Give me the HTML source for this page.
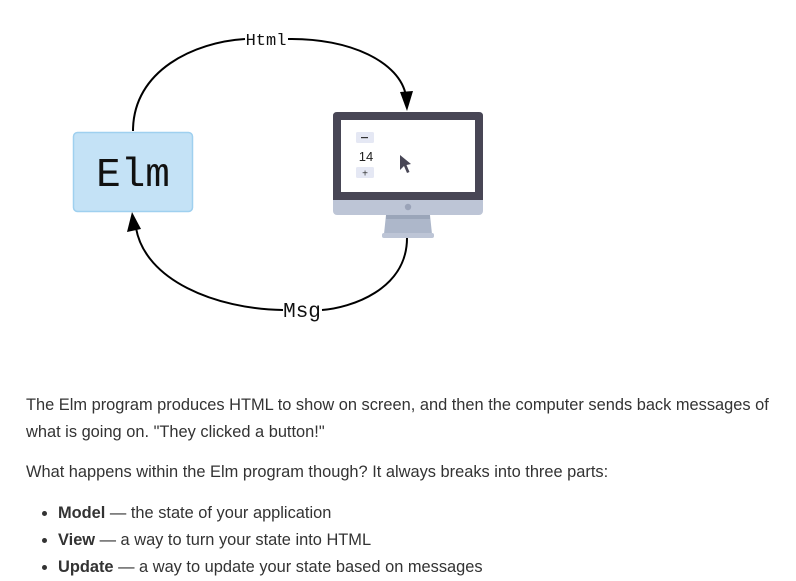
<!DOCTYPE html>
<html><head><meta charset="utf-8"><style>
html,body{margin:0;padding:0;background:#fff;width:796px;height:580px;overflow:hidden}
body{font-family:"Liberation Sans",Arial,sans-serif;font-size:16.4px;color:#333;}
svg{position:absolute;left:0;top:0}
.t{position:absolute;left:26px;width:765px;line-height:27px;margin:0}
ul{position:absolute;left:0;top:500px;margin:0;padding-left:58px;line-height:27px;list-style:disc}
</style></head><body>
<svg width="796" height="360" viewBox="0 0 796 360">
<rect x="73.5" y="132.5" width="119" height="79" rx="4" fill="#c4e2f6" stroke="#9fd0ef" stroke-width="1.5"/>
<text x="133" y="186" text-anchor="middle" font-family="Liberation Mono,monospace" font-size="41" fill="#111">Elm</text>
<g fill="none" stroke="#000" stroke-width="2">
<path d="M133,131 C133,70 195,42 245,39"/>
<path d="M288,39 C350,38 400,62 406,96"/>
<path d="M407,238 C407,290 350,308 322,310"/>
<path d="M283,310 C215,309 145,280 136,228"/>
</g>
<polygon points="407,111 400,92 413,91" fill="#000"/>
<polygon points="132,212 127,232 141,229" fill="#000"/>
<text x="266" y="45" text-anchor="middle" font-family="Liberation Mono,monospace" font-size="17" fill="#111">Html</text>
<text x="302" y="317" text-anchor="middle" font-family="Liberation Mono,monospace" font-size="21" fill="#111">Msg</text>
<path d="M386,215 L430,215 L432,234 L384,234 Z" fill="#adb7ca"/>
<rect x="386" y="215" width="44" height="4" fill="#9aa5b9"/>
<rect x="382" y="233" width="52" height="5" rx="2" fill="#bdc5d6"/>
<rect x="333" y="112" width="150" height="103" rx="4" fill="#bdc5d6"/>
<path d="M337,112 H479 Q483,112 483,116 V200 H333 V116 Q333,112 337,112 Z" fill="#484655"/>
<rect x="341" y="120" width="134" height="72" fill="#fff"/>
<circle cx="408" cy="207" r="3.2" fill="#9aa3b8"/>
<rect x="356" y="132" width="18" height="11" rx="1.5" fill="#e5e8f4"/>
<rect x="361" y="137" width="7" height="1.2" fill="#333"/>
<text x="366" y="161" text-anchor="middle" font-family="Liberation Sans,sans-serif" font-size="13" fill="#222">14</text>
<rect x="356" y="167" width="18" height="11" rx="1.5" fill="#e5e8f4"/>
<text x="365" y="176.5" text-anchor="middle" font-family="Liberation Sans,sans-serif" font-size="10" fill="#333">+</text>
<path d="M400,155 L400,170 L404,166 L407,173 L409.5,172 L406.5,165 L411,164 Z" fill="#484655"/>
</svg>
<p class="t" style="top:392px">The Elm program produces HTML to show on screen, and then the computer sends back messages of what is going on. "They clicked a button!"</p>
<p class="t" style="top:459px">What happens within the Elm program though? It always breaks into three parts:</p>
<ul>
<li><b>Model</b> — the state of your application</li>
<li><b>View</b> — a way to turn your state into HTML</li>
<li><b>Update</b> — a way to update your state based on messages</li>
</ul>
</body></html>
